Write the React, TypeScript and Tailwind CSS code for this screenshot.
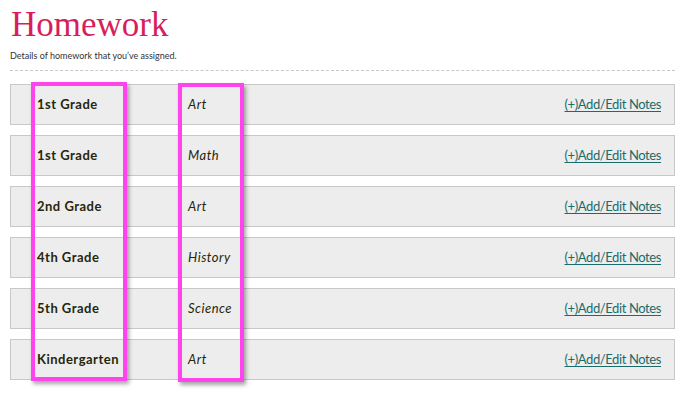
export default function App() {
  const rows = [
    ["1st Grade", "Art"],
    ["1st Grade", "Math"],
    ["2nd Grade", "Art"],
    ["4th Grade", "History"],
    ["5th Grade", "Science"],
    ["Kindergarten", "Art"],
  ];
  return (
    <div className="relative w-[690px] h-[420px] bg-white pl-[10px] pt-[5px]" style={{ fontFamily: "Lato, 'Open Sans', sans-serif" }}>
      <h1 className="text-[35px] leading-[40px] text-[#d61f5c] pl-[1px]" style={{ fontFamily: "'Liberation Serif', serif" }}>Homework</h1>
      <p className="mt-[5px] text-[9px] leading-[12px] text-[#333]">Details of homework that you&#8217;ve assigned.</p>
      <div className="mt-[8px] w-[665px] border-t border-dashed border-[#c8c8c8]" />
      <div className="mt-[13px] flex w-[665px] flex-col gap-[10px]">
        {rows.map(([g, s], i) => (
          <div key={i} className="flex h-[41px] items-center border border-[#c8c8c8] bg-[#ededed] pl-[26px] pr-[13px] text-[13px] text-[#26260a]">
            <div className="w-[151px] font-bold tracking-[0.5px]">{g}</div>
            <div className="italic tracking-[0.5px]">{s}</div>
            <a className="ml-auto text-[13px] tracking-[-0.4px] text-[#1a6b6b] underline underline-offset-2">(+)Add/Edit Notes</a>
          </div>
        ))}
      </div>
      <div className="absolute left-[31px] top-[82px] h-[299px] w-[96px] border-4 border-[#ff44ee] shadow-[2px_3px_4px_rgba(0,0,0,0.35)]" />
      <div className="absolute left-[178px] top-[83px] h-[299px] w-[66px] border-4 border-[#ff44ee] shadow-[2px_3px_4px_rgba(0,0,0,0.35)]" />
    </div>
  );
}
